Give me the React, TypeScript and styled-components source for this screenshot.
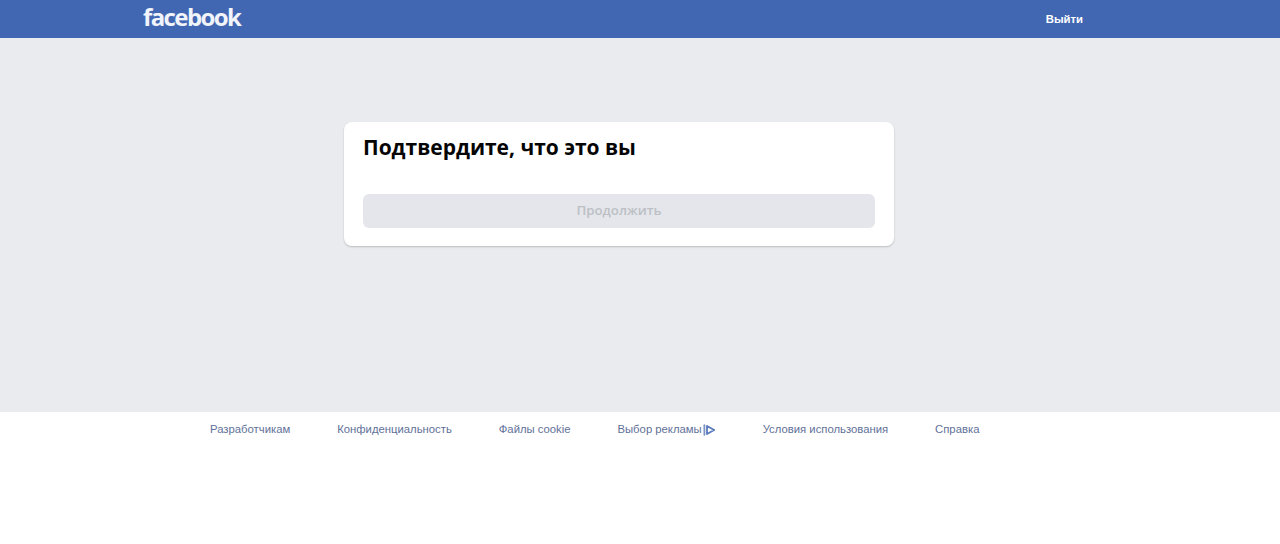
import React from "react";
import styled, { createGlobalStyle } from "styled-components";

const Global = createGlobalStyle`
  html, body { margin: 0; padding: 0; background: #fff; }
  body { font-family: "Liberation Sans", Arial, sans-serif; }
`;

const Page = styled.div`
  display: flex;
  flex-direction: column;
  min-height: 544px;
  background: #fff;
`;

const TopBar = styled.header`
  display: flex;
  align-items: center;
  justify-content: space-between;
  box-sizing: border-box;
  height: 38px;
  padding: 0 197px 0 143px;
  background: #4267b2;
`;

const Logo = styled.a`
  font-family: "Open Sans", sans-serif;
  font-size: 24px;
  font-weight: 700;
  line-height: 34px;
  letter-spacing: -1.6px;
  color: #f1f4fa;
  text-decoration: none;
  align-self: flex-start;
`;

const Logout = styled.a`
  font-family: "Liberation Sans", Arial, sans-serif;
  font-size: 11.3px;
  font-weight: 700;
  line-height: 36px;
  color: #fff;
  text-decoration: none;
`;

const Main = styled.main`
  display: flex;
  justify-content: center;
  align-items: flex-start;
  box-sizing: border-box;
  height: 374px;
  padding: 84px 42px 0 0;
  background: #e9ebee;
`;

const Card = styled.section`
  box-sizing: border-box;
  width: 550px;
  height: 124px;
  padding: 11px 19px 19px;
  background: #fff;
  border-radius: 8px;
  box-shadow: 0 1px 2px rgba(0, 0, 0, 0.2);
`;

const Title = styled.h1`
  margin: 0 0 33px;
  font-family: "Open Sans", "Noto Sans", sans-serif;
  font-size: 21px;
  font-weight: 700;
  line-height: 28px;
  letter-spacing: -0.02px;
  color: #050505;
`;

const ContinueButton = styled.button`
  display: block;
  width: 100%;
  height: 34px;
  padding: 0 0 2px;
  border: 0;
  border-radius: 6px;
  background: #e4e6eb;
  color: #bcc0c4;
  font-family: "Open Sans", "Noto Sans", sans-serif;
  font-size: 13.3px;
  font-weight: 600;
`;

const Footer = styled.footer`
  display: flex;
  align-items: center;
  gap: 47px;
  padding: 10px 0 0 210px;
`;

const FooterLink = styled.a`
  display: inline-flex;
  align-items: center;
  font-family: "Liberation Sans", Arial, sans-serif;
  font-size: 11.3px;
  line-height: 15px;
  color: #5f7199;
  text-decoration: none;
`;

const AdIcon = () => (
  <svg width="13" height="12" viewBox="0 0 13 12" fill="none" style={{ marginLeft: 1 }}>
    <path d="M1.4 1.2v9.6" stroke="#7f93c4" strokeWidth="1.8" strokeLinecap="round" />
    <path d="M4 2 11.2 6 4 10Z" stroke="#5b7bbd" strokeWidth="1.8" strokeLinejoin="round" />
  </svg>
);

const links = ["Разработчикам", "Конфиденциальность", "Файлы cookie"];
const moreLinks = ["Условия использования", "Справка"];

export default function App() {
  return (
    <Page>
      <Global />
      <TopBar>
        <Logo href="#">facebook</Logo>
        <Logout href="#">Выйти</Logout>
      </TopBar>
      <Main>
        <Card>
          <Title>Подтвердите, что это вы</Title>
          <ContinueButton disabled>Продолжить</ContinueButton>
        </Card>
      </Main>
      <Footer>
        {links.map((l) => (
          <FooterLink href="#" key={l}>{l}</FooterLink>
        ))}
        <FooterLink href="#">
          Выбор рекламы
          <AdIcon />
        </FooterLink>
        {moreLinks.map((l) => (
          <FooterLink href="#" key={l}>{l}</FooterLink>
        ))}
      </Footer>
    </Page>
  );
}
